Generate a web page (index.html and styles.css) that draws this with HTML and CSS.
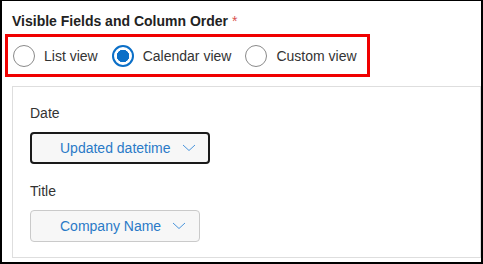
FILE: index.html
```html
<!DOCTYPE html>
<html lang="en">
<head>
    <meta charset="UTF-8">
    <title>Visible Fields</title>
    <link rel="stylesheet" href="styles.css">
</head>
<body>
    <div class="frame">
        <h1 class="field-title">Visible Fields and Column Order <span class="required">*</span></h1>

        <div class="view-options">
            <label class="radio">
                <span class="radio-dot"></span>
                <span>List view</span>
            </label>
            <label class="radio checked">
                <span class="radio-dot"></span>
                <span>Calendar view</span>
            </label>
            <label class="radio">
                <span class="radio-dot"></span>
                <span>Custom view</span>
            </label>
        </div>

        <div class="panel">
            <div class="field-label">Date</div>
            <button class="picker focused">
                <span>Updated datetime</span>
                <svg class="chevron" width="14" height="8" viewBox="0 0 14 8"><path d="M1 1 L7 6.5 L13 1" fill="none" stroke="#4a95dc" stroke-width="1"/></svg>
            </button>

            <div class="field-label second">Title</div>
            <button class="picker narrow">
                <span>Company Name</span>
                <svg class="chevron" width="14" height="8" viewBox="0 0 14 8"><path d="M1 1 L7 6.5 L13 1" fill="none" stroke="#4a95dc" stroke-width="1"/></svg>
            </button>
        </div>
    </div>
</body>
</html>
```

FILE: styles.css
```css
body {
    margin: 0;
    background: #fff;
    font-family: "Liberation Sans", Arial, sans-serif;
    font-size: 14px;
    color: #333;
}
.frame {
    width: 483px;
    height: 264px;
    box-sizing: border-box;
    border: 2px solid #000;
    border-top-width: 1px;
    padding-top: 12px;
}
.field-title {
    margin: 0 0 5px 10px;
    font-size: 14px;
    line-height: 16px;
    font-weight: bold;
    color: #222;
}
.required {
    color: #d9534f;
    font-weight: normal;
}
.view-options {
    display: flex;
    align-items: center;
    width: 365px;
    height: 43px;
    box-sizing: border-box;
    margin-left: 3px;
    padding-left: 5px;
    border: 3px solid #f00000;
}
.radio {
    display: flex;
    flex-shrink: 0;
    align-items: center;
    gap: 9px;
    margin-right: 14px;
    white-space: nowrap;
    color: #333;
}
.radio-dot {
    flex-shrink: 0;
    width: 22px;
    height: 22px;
    box-sizing: border-box;
    border: 1px solid #8a8a8a;
    border-radius: 50%;
}
.radio.checked .radio-dot {
    border: 2px solid #0b6fc7;
    background: radial-gradient(circle, #0b6fc7 0 6px, #fff 6.5px);
}
.panel {
    margin: 9px 0 0 10px;
    height: 172px;
    box-sizing: border-box;
    border: 1px solid #dedede;
    padding: 18px 0 0 17px;
}
.field-label {
    line-height: 16px;
    color: #333;
}
.field-label.second {
    margin-top: 19px;
}
.picker {
    display: flex;
    align-items: center;
    gap: 11px;
    width: 180px;
    height: 32px;
    margin-top: 11px;
    padding: 0 0 0 29px;
    box-sizing: border-box;
    background: #f7f7f7;
    border: 1px solid #cacaca;
    border-radius: 4px;
    font-family: inherit;
    font-size: 14px;
    color: #2a7ac7;
}
.picker.focused {
    border: 2px solid #1a1a1a;
    padding-left: 28px;
}
.picker.narrow {
    width: 170px;
}
.chevron {
    display: block;
}
```
